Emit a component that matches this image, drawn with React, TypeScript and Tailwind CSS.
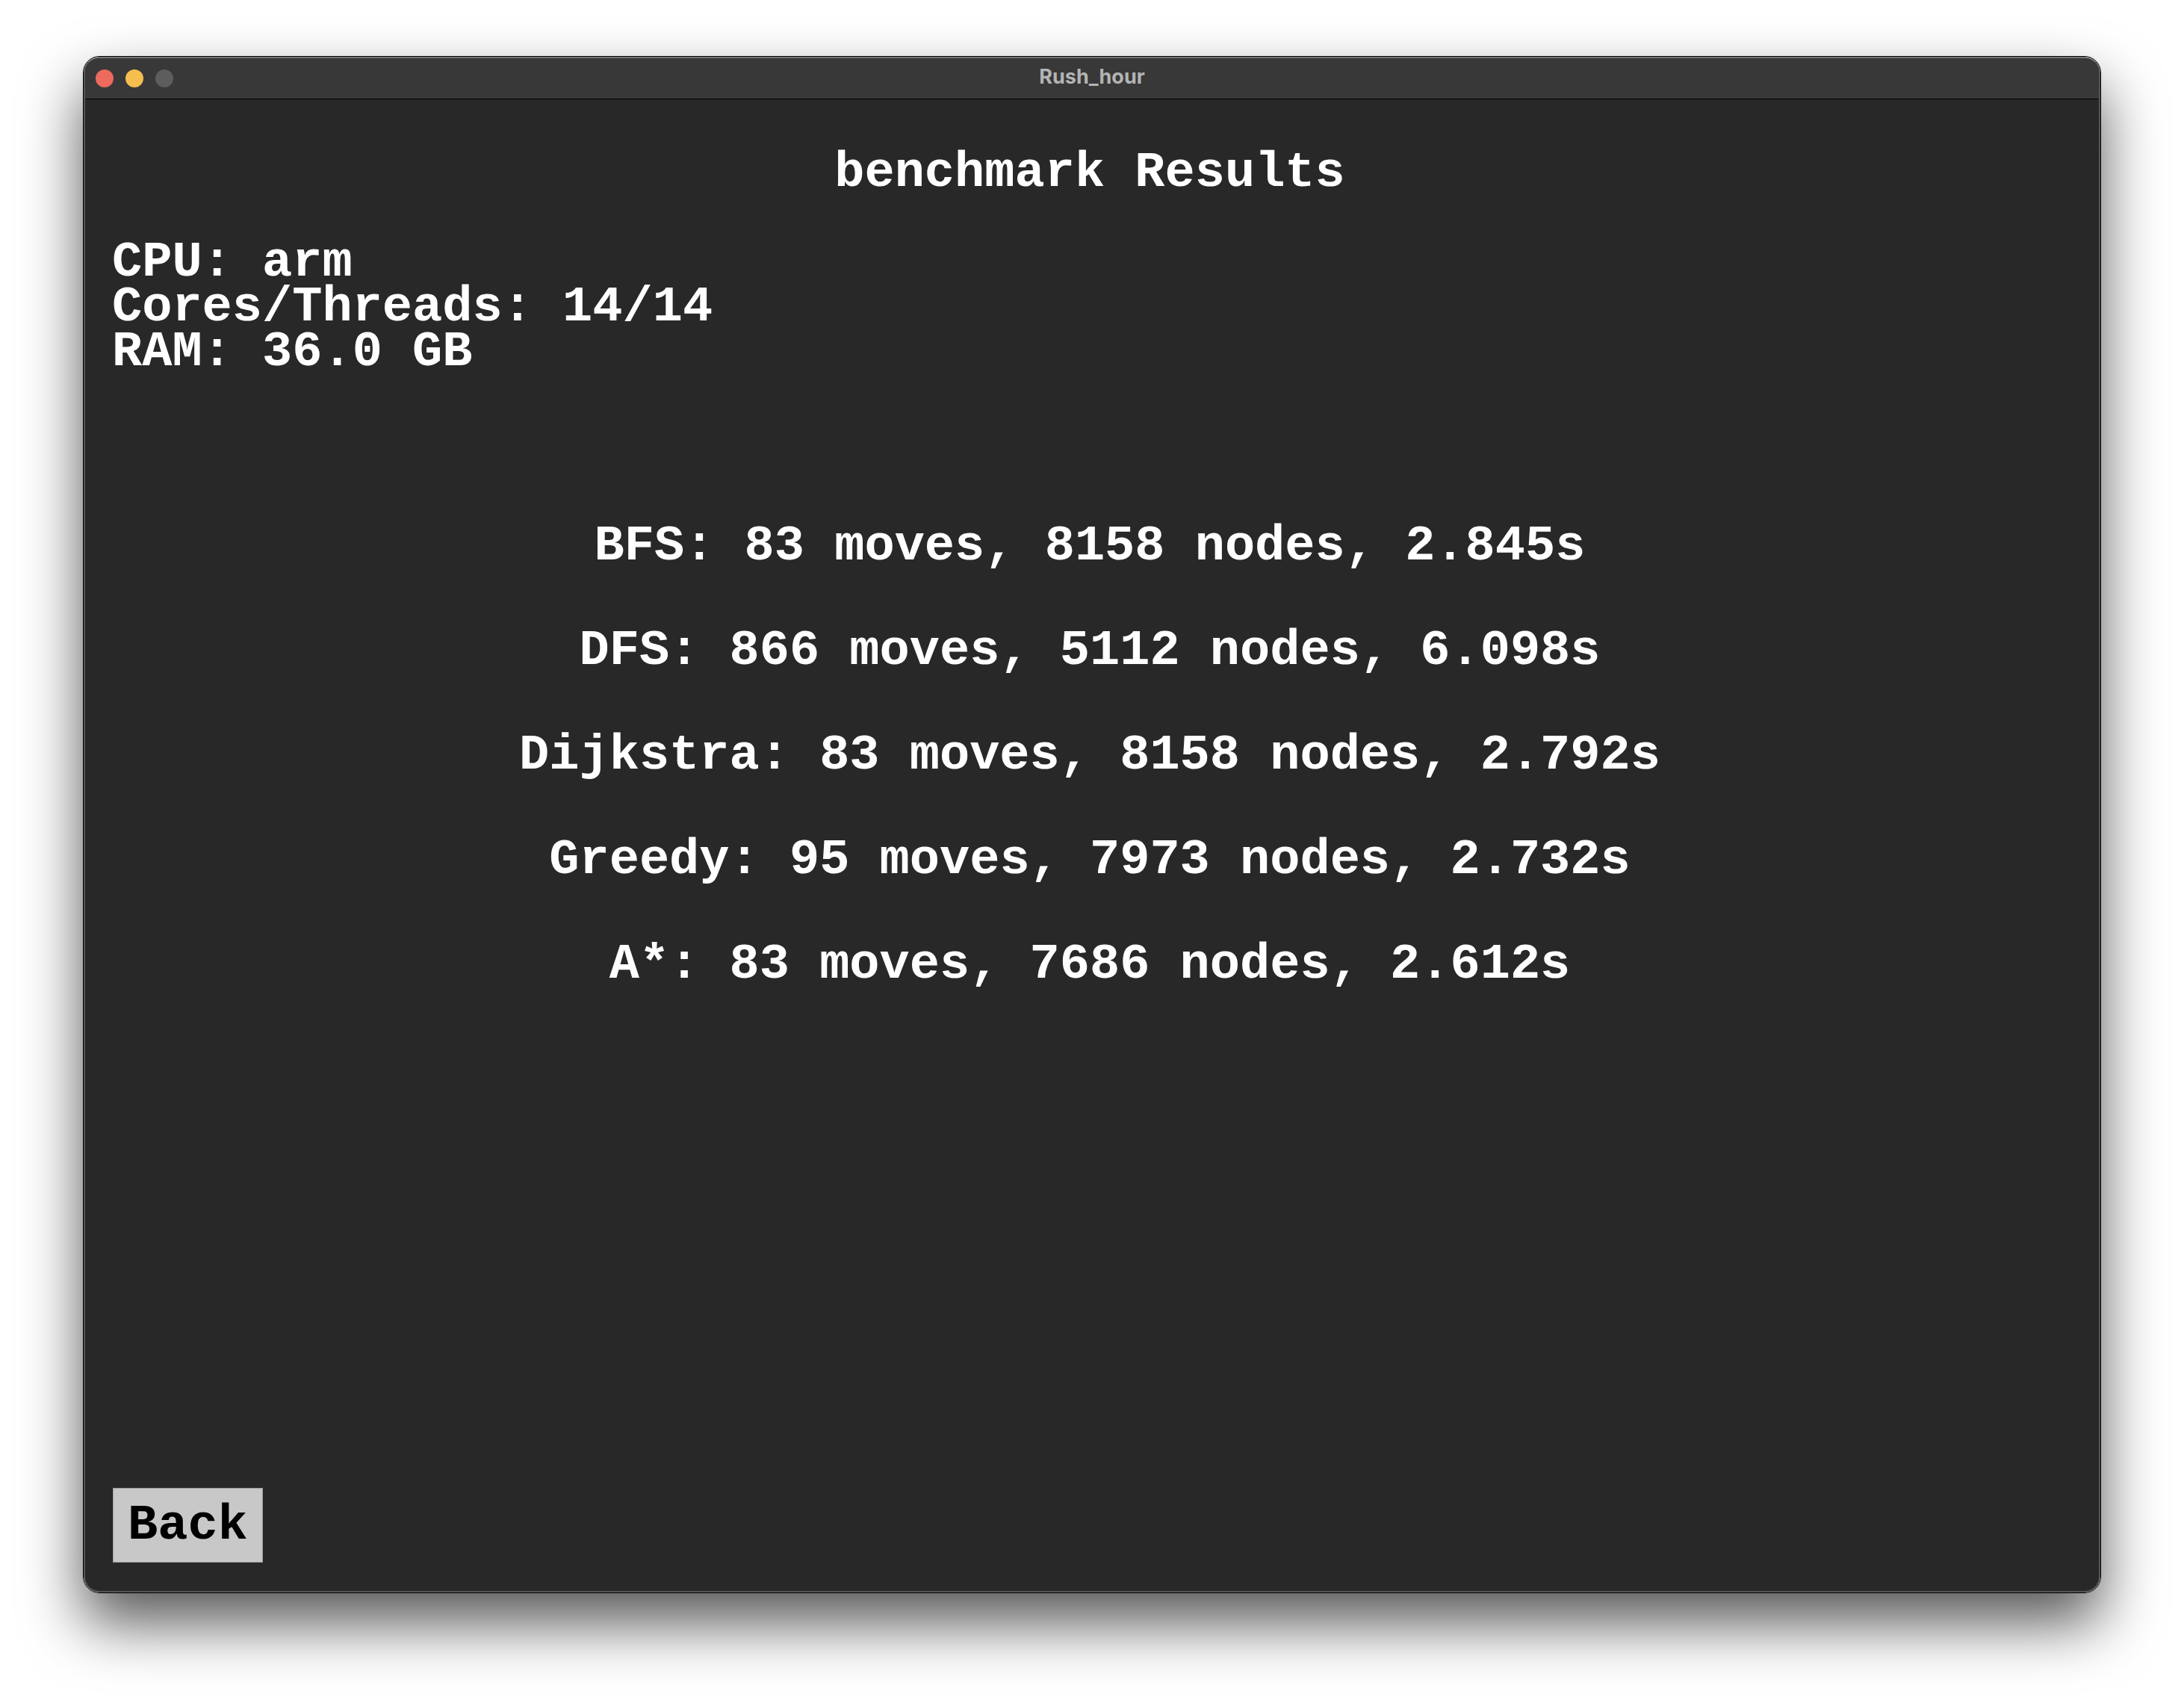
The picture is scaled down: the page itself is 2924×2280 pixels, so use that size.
const specs = ['CPU: arm', 'Cores/Threads: 14/14', 'RAM: 36.0 GB'];

const results = [
  'BFS: 83 moves, 8158 nodes, 2.845s',
  'DFS: 866 moves, 5112 nodes, 6.098s',
  'Dijkstra: 83 moves, 8158 nodes, 2.792s',
  'Greedy: 95 moves, 7973 nodes, 2.732s',
  'A*: 83 moves, 7686 nodes, 2.612s',
];

function TitleBar() {
  return (
    <header className="grid h-[55px] grid-cols-[1fr_auto_1fr] items-center border-b border-black bg-[#383838] px-[14px]">
      <div className="flex gap-4">
        <button type="button" aria-label="Close" className="size-6 rounded-full bg-[#ed6a5e]" />
        <button type="button" aria-label="Minimize" className="size-6 rounded-full bg-[#f5bf4f]" />
        <button type="button" aria-label="Zoom" disabled className="size-6 rounded-full bg-[#5d5d5d]" />
      </div>
      <span className="pb-1 font-['Inter',sans-serif] text-[27px] leading-8 font-bold text-[#b4b4b4]">Rush_hour</span>
    </header>
  );
}

export default function App() {
  return (
    <div className="flex min-h-screen bg-white px-[111px] pt-[75px] pb-[147px]">
      <div className="flex flex-1 rounded-[22px] border border-black shadow-[0_40px_80px_rgba(0,0,0,0.66)]">
        <div className="flex flex-1 flex-col overflow-hidden rounded-[21px] border-2 border-[#555555] border-t-[#747474] bg-[#282828]">
          <TitleBar />
          <main className="flex flex-1 flex-col pt-[68px] pr-[42px] pb-[38px] pl-[36px] font-['Liberation_Mono',monospace] text-[67px] leading-[60px] font-bold text-white">
            <h1 className="text-center">benchmark Results</h1>
            <ul className="mt-[60px]">
              {specs.map((line) => (
                <li key={line}>{line}</li>
              ))}
            </ul>
            <ul className="mt-[200px] flex flex-col gap-20 text-center">
              {results.map((line) => (
                <li key={line}>{line}</li>
              ))}
            </ul>
            <button
              type="button"
              className="mt-auto ml-px self-start border border-[#9a9a9a] bg-[#c8c8c8] px-[19px] py-[19px] text-black"
            >
              Back
            </button>
          </main>
        </div>
      </div>
    </div>
  );
}
